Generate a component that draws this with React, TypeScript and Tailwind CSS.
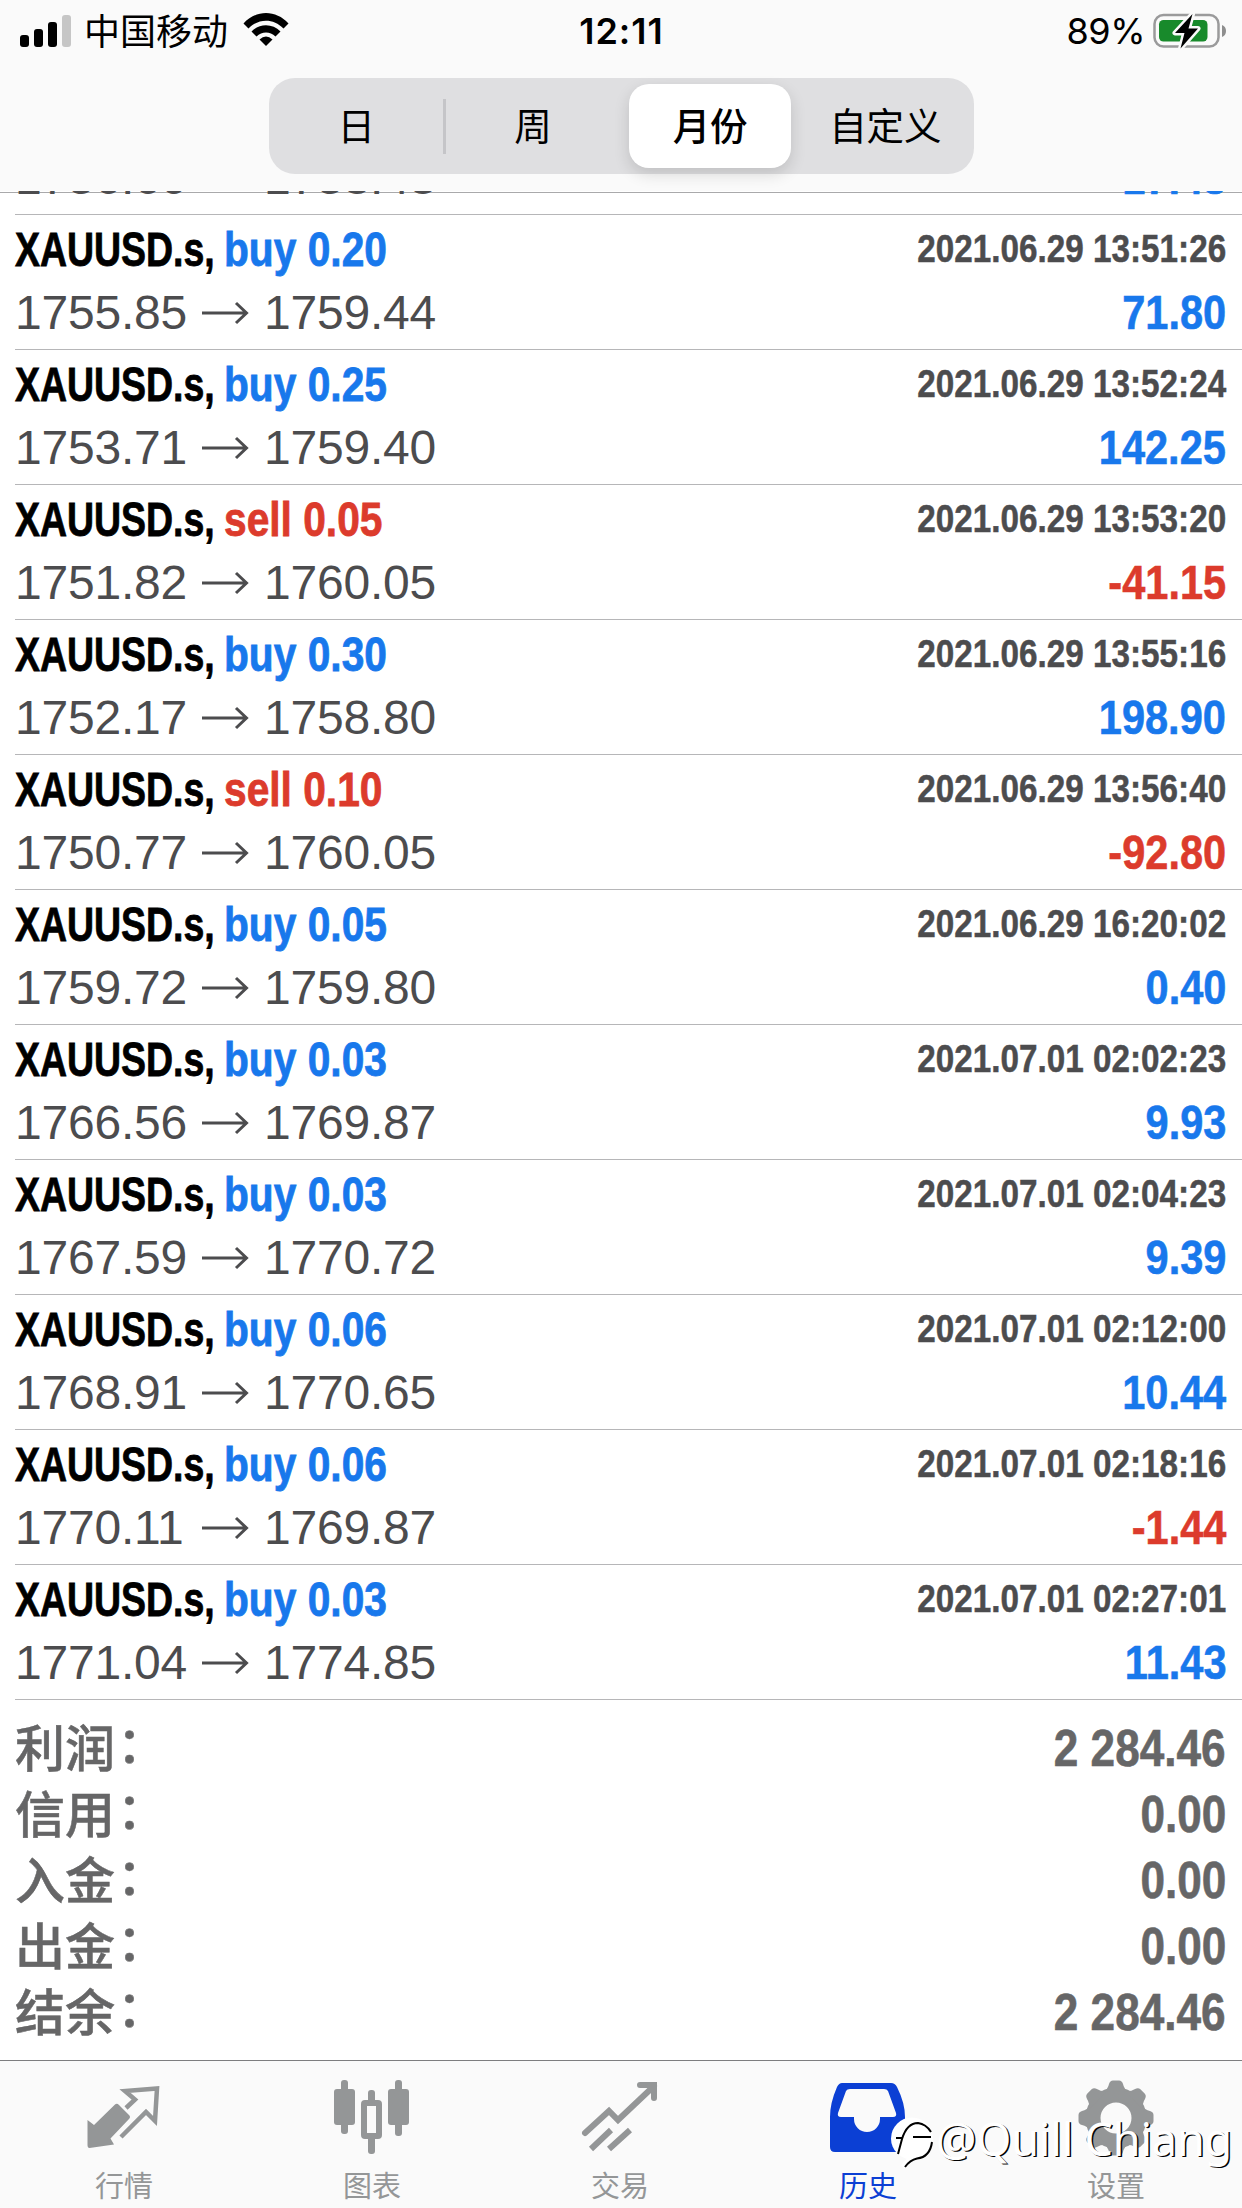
import { ReactNode } from "react";

/* ================= DATA ================= */
type Deal = {
    side: "buy" | "sell";
    lots: string;
    open: string;
    close: string;
    time: string;
    profit: string;
};

const deals: Deal[] = [
    { side: "buy", lots: "0.20", open: "1755.85", close: "1759.44", time: "2021.06.29 13:51:26", profit: "71.80" },
    { side: "buy", lots: "0.25", open: "1753.71", close: "1759.40", time: "2021.06.29 13:52:24", profit: "142.25" },
    { side: "sell", lots: "0.05", open: "1751.82", close: "1760.05", time: "2021.06.29 13:53:20", profit: "-41.15" },
    { side: "buy", lots: "0.30", open: "1752.17", close: "1758.80", time: "2021.06.29 13:55:16", profit: "198.90" },
    { side: "sell", lots: "0.10", open: "1750.77", close: "1760.05", time: "2021.06.29 13:56:40", profit: "-92.80" },
    { side: "buy", lots: "0.05", open: "1759.72", close: "1759.80", time: "2021.06.29 16:20:02", profit: "0.40" },
    { side: "buy", lots: "0.03", open: "1766.56", close: "1769.87", time: "2021.07.01 02:02:23", profit: "9.93" },
    { side: "buy", lots: "0.03", open: "1767.59", close: "1770.72", time: "2021.07.01 02:04:23", profit: "9.39" },
    { side: "buy", lots: "0.06", open: "1768.91", close: "1770.65", time: "2021.07.01 02:12:00", profit: "10.44" },
    { side: "buy", lots: "0.06", open: "1770.11", close: "1769.87", time: "2021.07.01 02:18:16", profit: "-1.44" },
    { side: "buy", lots: "0.03", open: "1771.04", close: "1774.85", time: "2021.07.01 02:27:01", profit: "11.43" },
];

const totals = [
    { label: "利润", value: "2 284.46" },
    { label: "信用", value: "0.00" },
    { label: "入金", value: "0.00" },
    { label: "出金", value: "0.00" },
    { label: "结余", value: "2 284.46" },
];

/* ================= STATUS BAR ================= */
function StatusBar() {
    return (
        <div className="grid h-[62px] grid-cols-3 items-center pl-5 pr-[15px]">
            <div className="flex items-center">
                <svg width="51" height="32" viewBox="0 0 51 32">
                    <rect x="0" y="20" width="9" height="12" rx="3" />
                    <rect x="14" y="14" width="9" height="18" rx="3" />
                    <rect x="28" y="7" width="9" height="25" rx="3" />
                    <rect x="42" y="0" width="9" height="32" rx="3" fill="#c6c6c6" />
                </svg>
                <span className="ml-[13px] whitespace-nowrap pt-[3px] text-[36px] leading-[50px]">中国移动</span>
                <svg className="mb-0.5 ml-[15px]" width="46" height="34" viewBox="0 0 46 34">
                    <path d="M0.5 10.5C13-3.5 33-3.5 45.5 10.5L40.5 15.5C30.5 5 15.5 5 5.500 15.5Z" />
                    <path d="M8.500 18.500C16.500 10 29.500 10 37.500 18.500L32.500 23.500C27 18 19 18 13.500 23.500Z" />
                    <path d="M16.500 26.500Q23 20.500 29.500 26.500L23 33Z" />
                </svg>
            </div>
            <div className="pr-1 text-center font-['Inter',sans-serif] text-[36px] font-semibold leading-[50px] tracking-[1px]">12:11</div>
            <div className="flex items-center justify-end">
                <span className="font-['Inter',sans-serif] text-[36px] leading-[50px] tracking-[-0.5px]">89%</span>
                <svg className="ml-[8px]" width="74" height="36" viewBox="0 0 74 36">
                    <rect x="1.500" y="2" width="64" height="31.500" rx="9" fill="none" stroke="#9a9a9b" strokeWidth="2.500" />
                    <rect x="6" y="7" width="48.500" height="21.500" rx="4.500" fill="#188a2b" />
                    <path d="M69 12Q73 13.500 73 18T69 24Z" fill="#8e8e8e" />
                    <path d="M39.500 1L22 20H31.500L27.500 35.500L45 15.500H35.500Z" stroke="#fafafa" strokeWidth="5" strokeLinejoin="round" />
                    <path d="M39.500 1L22 20H31.500L27.500 35.500L45 15.500H35.500Z" />
                </svg>
            </div>
        </div>
    );
}

function Segments() {
    return (
        <div className="mx-auto mt-4 grid h-24 w-[705px] grid-cols-4 items-center rounded-[26px] bg-[#dfdfe1] text-center text-[37.500px] leading-none">
            <div className="relative left-px flex h-[55px] items-center justify-center border-r-[3px] border-[#c5c5c8] pt-[3px]">日</div>
            <div className="pt-[3px]">周</div>
            <div className="ml-2 mr-1.5 flex h-[84px] items-center justify-center rounded-[20px] bg-white pt-[3px] font-medium shadow-[0_6px_16px_rgba(0,0,0,0.14)]">
                月份
            </div>
            <div className="pt-[3px]">自定义</div>
        </div>
    );
}

/* ================= HISTORY LIST ================= */
function Arrow() {
    return (
        <svg className="ml-[13px] mr-[15px] shrink-0" width="48" height="24" viewBox="0 0 48 24" fill="none" stroke="#4c4c4e" strokeWidth="3">
            <path d="M1 12H45M35 2L45.500 12L35 22" />
        </svg>
    );
}

function Prices({ open, close }: { open: string; close: string }) {
    return (
        <div className="flex items-center text-[48px] leading-[62px] tracking-[-0.2px] text-[#4c4c4e]">
            <span className="w-[173px]">{open}</span>
            <Arrow />
            <span>{close}</span>
        </div>
    );
}

function Profit({ value }: { value: string }) {
    return (
        <span className={`origin-right scale-x-[0.865] text-[48px] font-bold leading-[62px] [-webkit-text-stroke:0.6px] ${value.startsWith("-") ? "text-[#dc3b2c]" : "text-[#1878ec]"}`}>
            {value}
        </span>
    );
}

function DealRow({ deal }: { deal: Deal }) {
    const sideColor = deal.side === "buy" ? "text-[#1878ec]" : "text-[#dc3b2c]";

    return (
        <li className="ml-[15px] h-[135px] border-b border-[#b6b6b8] pr-4 pt-1">
            <div className="flex h-[63px] items-start justify-between font-bold">
                <div className="flex whitespace-nowrap text-[48px] leading-[62px] [-webkit-text-stroke:0.8px]">
                    <span className="w-[209px] origin-left scale-x-[0.78]">XAUUSD.s,</span>
                    <span className={`origin-left scale-x-[0.848] ${sideColor}`}>{deal.side} {deal.lots}</span>
                </div>
                <time className="origin-right scale-x-[0.853] text-[39px] leading-[60px] text-[#4c4c4e] [-webkit-text-stroke:0.5px]">{deal.time}</time>
            </div>
            <div className="flex items-center justify-between">
                <Prices open={deal.open} close={deal.close} />
                <Profit value={deal.profit} />
            </div>
        </li>
    );
}

/* ================= TAB BAR ================= */
function Tab({ label, active, children }: { label: string; active?: boolean; children: ReactNode }) {
    return (
        <div className={`flex flex-col items-center pt-[18px] ${active ? "text-[#0b3fd4]" : "text-[#949697]"}`}>
            <svg width="78" height="78" viewBox="0 0 78 78" fill="currentColor">{children}</svg>
            <span className="mt-3 text-[29px] leading-[36px]">{label}</span>
        </div>
    );
}

// eight rounded teeth round a hub
function Gear() {
    return (
        <>
            <circle cx="39" cy="39" r="23" fill="none" stroke="currentColor" strokeWidth="15" />
            {[0, 45, 90, 135, 180, 225, 270, 315].map((angle) => (
                <path key={angle} transform={`rotate(${angle} 39 39)`} d="M26 14Q31 10 32 5Q33 1.500 36 1.500H42Q45 1.500 46 5Q47 10 52 14Z" />
            ))}
        </>
    );
}

function TabBar() {
    return (
        <nav className="relative grid h-[148px] grid-cols-[repeat(5,248px)] border-t border-[#7d7d7f] bg-[#fafafa]">
            <Tab label="行情">
                <path d="M2.500 41L9 46L30 25.500Q32 24 34 26L44 36Q46 38 44 40L25.500 59.500L29 65.500L4.500 69Q2.500 69 2.500 66Z" />
                <path d="M41 29L50 20.500L40 12L72 9.500L70 42L61 33L36 58" fill="none" stroke="currentColor" strokeWidth="4.500" />
            </Tab>
            <Tab label="图表">
                <rect x="1" y="10" width="21" height="36" rx="3" />
                <rect x="8" y="1" width="7" height="54" rx="3" />
                <rect x="55" y="10" width="21" height="36" rx="3" />
                <rect x="62" y="1" width="7" height="56" rx="3" />
                <rect x="31" y="24" width="15" height="33" rx="1" fill="none" stroke="currentColor" strokeWidth="6" />
                <rect x="35" y="11" width="7" height="13" rx="3" />
                <rect x="35" y="57" width="7" height="18" rx="3" />
            </Tab>
            <Tab label="交易">
                <path d="M4 54L28 32L37 41L73 7M59 6H73V19" fill="none" stroke="currentColor" strokeWidth="6" strokeLinecap="round" />
                <path d="M10 70L30 51M28 70L49 51" fill="none" stroke="currentColor" strokeWidth="6" />
            </Tab>
            <Tab label="历史" active>
                <path fillRule="evenodd" d="M13 4H62Q66 4 68 8Q76 24 76 38V68Q76 73 71 73H6Q1 73 1 68V38Q1 24 8 8Q10 4 13 4ZM17 12L9 34Q8 38 12 38H25V40A13 13 0 0 0 51 40V38H64Q68 38 67 34L59 12Q58 10 55 10H21Q18 10 17 12Z" />
            </Tab>
            <Tab label="设置">
                <Gear />
            </Tab>

            {/* signature over the tabs */}
            <div className="absolute right-[10px] top-[48px] flex items-center">
                <svg className="mt-2" width="46" height="52" viewBox="0 0 46 52" fill="none">
                    <circle cx="22" cy="21.500" r="21" fill="#fff" />
                    <path d="M39 25Q37 40 24 40Q18 43 13 50" stroke="#fff" strokeWidth="5" />
                    <path d="M8 37L12 22Q17 6 28 6Q36 7 41 15M6 21H13M23 20H41M42 25Q40 40 27 41.500Q20 43 15 50" stroke="#000" strokeWidth="2" />
                </svg>
                <span className="whitespace-nowrap font-['Noto_Sans',sans-serif] text-[45px] leading-[60px] tracking-[-0.2px] text-white [text-shadow:1.5px_1px_0_#000]">
                    @Quill Chiang
                </span>
            </div>
        </nav>
    );
}

export default function App() {
    return (
        <div className="flex h-[2208px] w-[1242px] flex-col overflow-hidden bg-white font-['Liberation_Sans','Noto_Sans_CJK_SC',sans-serif] text-black">
            <header className="h-[191px] shrink-0 bg-[#fafafa]">
                <StatusBar />
                <Segments />
            </header>

            <main className="flex-1">
                {/* row scrolled under the header */}
                <div className="relative h-6 overflow-hidden">
                    <div className="absolute top-px h-px w-full bg-[#a9a9ab]" />
                    <div className="relative ml-[15px] flex h-6 items-end justify-between border-b border-[#b6b6b8] pb-[5px] pr-4">
                        <Prices open="1756.60" close="1758.43" />
                        <Profit value="17.48" />
                    </div>
                </div>

                <ul>
                    {deals.map((deal) => (
                        <DealRow key={deal.time} deal={deal} />
                    ))}
                </ul>

                <dl className="pl-[15px] pr-4 pt-[17px]">
                    {totals.map((item) => (
                        <div key={item.label} className="flex h-[66px] items-center justify-between text-[#666667]">
                            <dt className="text-[50px] font-medium leading-[66px] [-webkit-text-stroke:0.5px]">
                                {item.label}<span className="relative -top-1 left-0.5">：</span>
                            </dt>
                            <dd className="mb-0.5 origin-right scale-x-[0.865] text-[51px] font-bold leading-[64px] [-webkit-text-stroke:0.6px]">{item.value}</dd>
                        </div>
                    ))}
                </dl>
            </main>

            <TabBar />
        </div>
    );
}
